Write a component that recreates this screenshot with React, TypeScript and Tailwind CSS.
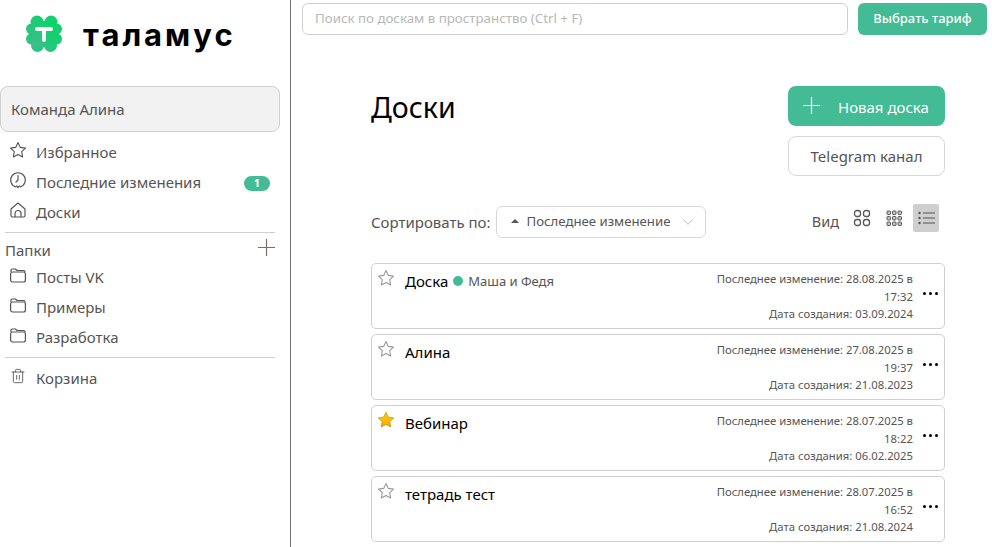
import React from "react";
import { ChevronDown, Trash2 } from "lucide-react";

function Logo() {
  return (
    <svg width="38" height="38" viewBox="0 0 38 38">
      <defs>
        <linearGradient id="logoGrad" x1="0" y1="1" x2="1" y2="0.2">
          <stop offset="0" stopColor="#45b995" />
          <stop offset="1" stopColor="#00d95f" />
        </linearGradient>
      </defs>
      <g fill="url(#logoGrad)">
        <circle cx="12" cy="7" r="6.500" />
        <circle cx="26" cy="7" r="6.500" />
        <circle cx="6.500" cy="14" r="5.500" />
        <circle cx="31.500" cy="14" r="5.500" />
        <circle cx="6.500" cy="24" r="5.500" />
        <circle cx="31.500" cy="24" r="5.500" />
        <circle cx="12.500" cy="30.500" r="6.500" />
        <circle cx="25.500" cy="30.500" r="6.500" />
        <rect x="7" y="6" width="24" height="26" />
      </g>
      <path d="M12 14h14M19 14v11" stroke="#fff" strokeWidth="4" strokeLinecap="round" fill="none" />
    </svg>
  );
}

function StarIcon({ color = "#555" }: { color?: string }) {
  return (
    <svg width="18" height="18" viewBox="0 0 18 18" fill="none">
      <path
        d="M9 1.600l2.300 4.800 5.200.7-3.800 3.600.9 5.200L9 13.400l-4.600 2.500.9-5.200L1.500 7.100l5.200-.7z"
        stroke={color}
        strokeWidth="1.100"
        strokeLinejoin="round"
      />
    </svg>
  );
}

function GoldStar() {
  return (
    <svg width="18" height="18" viewBox="0 0 18 18">
      <defs>
        <linearGradient id="goldGrad" x1="0" y1="0" x2="0" y2="1">
          <stop offset="0" stopColor="#ffd400" />
          <stop offset="1" stopColor="#f7a800" />
        </linearGradient>
      </defs>
      <path
        d="M9 1.200l2.400 5 5.400.7-4 3.700 1 5.400L9 13.400 4.200 16l1-5.400-4-3.700 5.400-.7z"
        fill="url(#goldGrad)"
        stroke="#b98a1c"
        strokeWidth="0.700"
        strokeLinejoin="round"
      />
    </svg>
  );
}

function ClockIcon() {
  return (
    <svg width="18" height="18" viewBox="0 0 18 18" fill="none" stroke="#555" strokeWidth="1.200" strokeLinecap="round" strokeLinejoin="round">
      <path d="M6.500 15.900A7.300 7.300 0 1 1 11.500 15.900" />
      <path d="M9 4.500V9l-2 2" />
      <path d="M7.500 15l1.500 1.500 1.500-1.500" />
    </svg>
  );
}

function HomeIcon() {
  return (
    <svg width="18" height="18" viewBox="0 0 18 18" fill="none" stroke="#555" strokeWidth="1.200" strokeLinejoin="round">
      <path d="M2 8l7-6 7 6v6.500a1.500 1.500 0 0 1-1.500 1.500h-11A1.500 1.500 0 0 1 2 14.500z" />
      <path d="M6 16v-3.500a3 3 0 0 1 6 0V16" />
    </svg>
  );
}

function FolderIcon() {
  return (
    <svg width="18" height="18" viewBox="0 0 18 18" fill="none" stroke="#555" strokeWidth="1.200" strokeLinejoin="round">
      <path d="M2 6V4.200C2 3.500 2.500 3 3.200 3h3.300l1.500 1.500h6.800c.7 0 1.200.5 1.200 1.200V6" />
      <rect x="1.600" y="6" width="14.800" height="10" rx="2" />
    </svg>
  );
}

function PlusMark({ color }: { color: string }) {
  return (
    <svg width="17" height="17" viewBox="0 0 17 17" fill="none" stroke={color} strokeWidth="1.200">
      <path d="M8.500 0v17M0 8.500h17" />
    </svg>
  );
}

function NavItem({ icon, label, badge }: { icon: React.ReactNode; label: string; badge?: string }) {
  return (
    <div className="flex h-[30px] items-center pb-[2px] pl-[9px] pr-[10px] text-[15px] text-[#555]">
      <span className="-mt-[5px] mr-[9px] flex w-[18px] justify-center">{icon}</span>
      <span className="flex-1">{label}</span>
      {badge && (
        <span className="mt-[2px] flex h-[15px] w-[26px] items-center justify-center rounded-full bg-[#43bb94] text-[11px] font-bold text-white">
          {badge}
        </span>
      )}
    </div>
  );
}

function Board({ star, name, tag, changed, created }: { star?: boolean; name: string; tag?: string; changed: string[]; created: string }) {
  return (
    <div className="flex h-[66px] rounded-[5px] border border-[#d0d0d0] pl-[5px] pr-[4px]">
      <div className="mt-[5px] w-[19px] shrink-0">{star ? <GoldStar /> : <StarIcon color="#9a9a9a" />}</div>
      <div className="ml-[9px] mt-[6px] flex flex-1 items-start">
        <span className="text-[15px] leading-[22px] text-black">{name}</span>
        {tag && (
          <span className="ml-[5px] flex items-center text-[13px] leading-[22px] text-[#555]">
            <span className="mr-[5px] h-[10px] w-[10px] rounded-full bg-[#43bb94]" />
            {tag}
          </span>
        )}
      </div>
      <div className="mr-[8px] flex w-[200px] flex-col justify-center pt-[1px] text-right text-[11.3px] leading-[17.5px] text-[#555]">
        <span>Последнее изменение: {changed[0]} в</span>
        <span>{changed[1]}</span>
        <span>Дата создания: {created}</span>
      </div>
      <div className="flex w-[19px] shrink-0 items-center justify-center gap-[3px] pb-[5px]">
        <span className="h-[3px] w-[3px] rounded-full bg-black" />
        <span className="h-[3px] w-[3px] rounded-full bg-black" />
        <span className="h-[3px] w-[3px] rounded-full bg-black" />
      </div>
    </div>
  );
}

export default function App() {
  return (
    <div className="flex h-[547px] overflow-hidden bg-white font-['Noto_Sans','Open_Sans',sans-serif]">
      <aside className="w-[291px] shrink-0 border-r border-[#707070] pr-[10px]">
        <div className="flex h-[86px] items-start pl-[25px] pt-[15px]">
          <Logo />
          <span className="ml-[20px] mt-[1px] font-['Inter',sans-serif] text-[31px] leading-[38px] font-bold tracking-[3px] text-black">
            таламус
          </span>
        </div>
        <div className="flex h-[46px] items-center rounded-[8px] border border-[#d0d0d0] bg-[#f2f2f2] pl-[10px] text-[15px] text-[#555]">
          Команда Алина
        </div>
        <div className="mt-[6px]">
          <NavItem icon={<StarIcon />} label="Избранное" />
          <NavItem icon={<ClockIcon />} label="Последние изменения" badge="1" />
          <NavItem icon={<HomeIcon />} label="Доски" />
        </div>
        <div className="mx-[5px] mt-[4px] border-t border-[#d0d0d0]" />
        <div className="mx-[5px] mt-[5px] flex h-[26px] items-center justify-between pb-[1px] text-[15px] text-[#555]">
          <span>Папки</span>
          <span className="-mt-[7px]">
            <PlusMark color="#7a6f66" />
          </span>
        </div>
        <div className="-mt-[1px]">
          <NavItem icon={<FolderIcon />} label="Посты VK" />
          <NavItem icon={<FolderIcon />} label="Примеры" />
          <NavItem icon={<FolderIcon />} label="Разработка" />
        </div>
        <div className="mx-[5px] mt-[4px] border-t border-[#d0d0d0]" />
        <div className="mt-[6px]">
          <NavItem icon={<Trash2 size={16} strokeWidth={1.300} />} label="Корзина" />
        </div>
      </aside>

      <main className="min-w-0 flex-1">
        <div className="flex gap-[10px] pl-[11px] pr-[5px] pt-[3px]">
          <div className="flex h-[32px] flex-1 items-center rounded-[6px] border border-[#d0d0d0] pl-[12px] text-[13.3px] text-[#b8b8b8]">
            Поиск по доскам в пространство (Ctrl + F)
          </div>
          <button className="h-[32px] w-[129px] rounded-[6px] bg-[#43bb94] text-[13px] font-medium text-white">Выбрать тариф</button>
        </div>

        <div className="ml-[80px] mt-[51px] w-[574px]">
          <div className="flex items-start justify-between">
            <h1 className="mt-[1px] text-[28.500px] leading-[40px] font-normal text-black">Доски</h1>
            <div className="flex w-[157px] flex-col gap-[10px]">
              <button className="flex h-[40px] items-center rounded-[8px] bg-[#43bb94] pl-[15px] text-[15px] text-white">
                <span className="-mt-[2px]">
                  <PlusMark color="#ffffff" />
                </span>
                <span className="ml-[18px] mt-[2px]">Новая доска</span>
              </button>
              <button className="h-[40px] rounded-[8px] border border-[#d8d8d8] text-[15px] text-[#555]">Telegram канал</button>
            </div>
          </div>

          <div className="mt-[30px] flex h-[32px] items-center">
            <span className="text-[15px] text-[#555]">Сортировать по:</span>
            <div className="ml-[5px] flex h-[32px] w-[210px] items-center rounded-[6px] border border-[#d8d8d8] pl-[14px] pr-[8px] text-[13.200px] text-[#555]">
              <span className="mb-[2px] h-0 w-0 border-x-[4px] border-b-[4px] border-x-transparent border-b-[#555]" />
              <span className="ml-[8px] flex-1">Последнее изменение</span>
              <ChevronDown size={18} strokeWidth={0.900} className="text-[#999]" />
            </div>
            <span className="ml-auto text-[14.500px] text-[#555]">Вид</span>
            <div className="-mt-[8px] ml-[14px] flex items-center">
              <svg width="18" height="18" viewBox="0 0 18 18" fill="none" stroke="#555" strokeWidth="1.300">
                <rect x="1.500" y="1.500" width="6" height="6" rx="2.500" />
                <rect x="10.500" y="1.500" width="6" height="6" rx="2.500" />
                <rect x="1.500" y="10.500" width="6" height="6" rx="2.500" />
                <rect x="10.500" y="10.500" width="6" height="6" rx="2.500" />
              </svg>
              <svg className="ml-[15px]" width="17" height="17" viewBox="0 0 17 17" fill="#c4c4c4" stroke="#555" strokeWidth="1">
                {[1, 6.500, 12].map((y) =>
                  [1, 6.500, 12].map((x) => <rect key={`${x}-${y}`} x={x} y={y} width="3.500" height="3.500" rx="0.800" />)
                )}
              </svg>
              <div className="ml-[10px] mr-[6px] flex h-[28px] w-[26px] items-center justify-center rounded-[2px] bg-[#cfcfcf]">
                <svg width="17" height="14" viewBox="0 0 17 14" fill="none" stroke="#555">
                  <path d="M5 2h12M5 7h12M5 12h12" strokeWidth="1" />
                  <circle cx="1.500" cy="2" r="1.200" fill="#555" stroke="none" />
                  <circle cx="1.500" cy="7" r="1.200" fill="#555" stroke="none" />
                  <circle cx="1.500" cy="12" r="1.200" fill="#555" stroke="none" />
                </svg>
              </div>
            </div>
          </div>

          <div className="mt-[25px] flex flex-col gap-[5px]">
            <Board name="Доска" tag="Маша и Федя" changed={["28.08.2025", "17:32"]} created="03.09.2024" />
            <Board name="Алина" changed={["27.08.2025", "19:37"]} created="21.08.2023" />
            <Board star name="Вебинар" changed={["28.07.2025", "18:22"]} created="06.02.2025" />
            <Board name="тетрадь тест" changed={["28.07.2025", "16:52"]} created="21.08.2024" />
          </div>
        </div>
      </main>
    </div>
  );
}
